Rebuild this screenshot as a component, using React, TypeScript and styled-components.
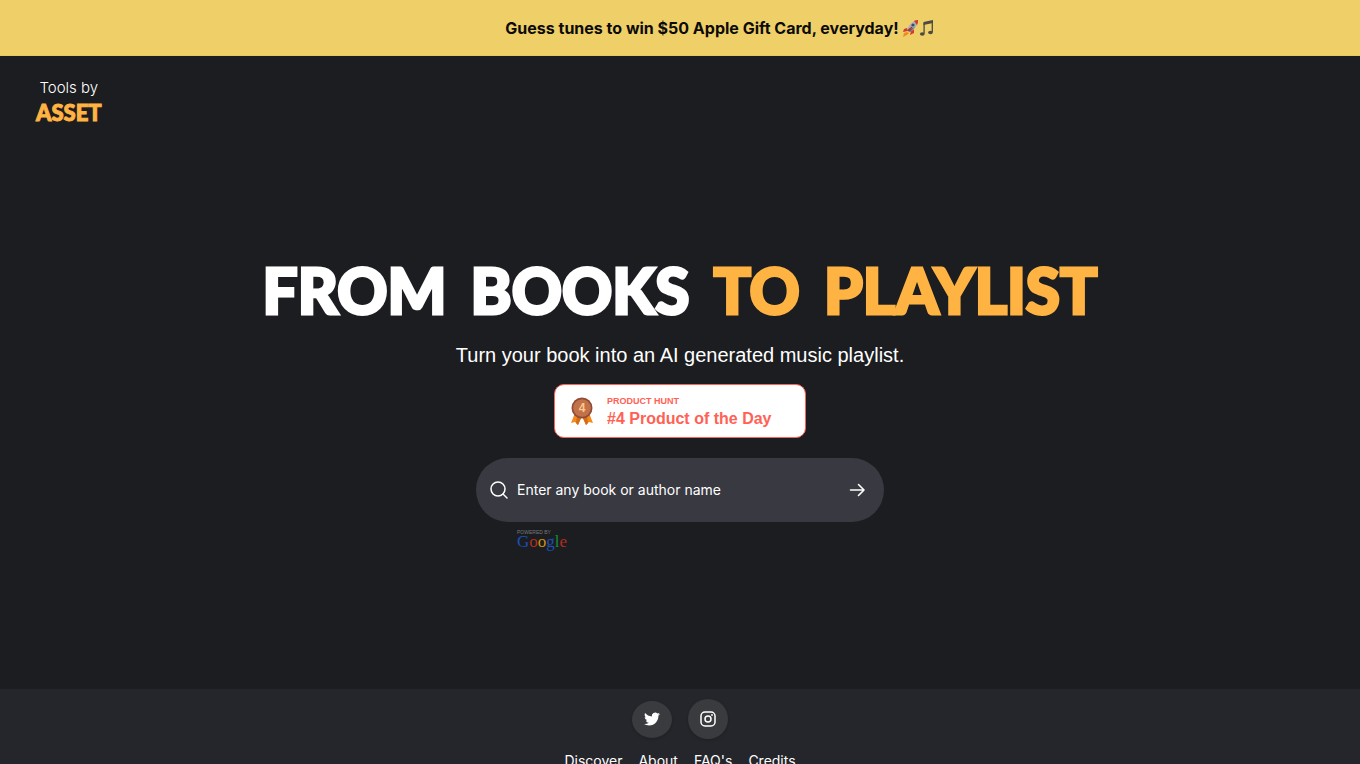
import React from "react";
import styled, { createGlobalStyle } from "styled-components";

const GlobalStyle = createGlobalStyle`
  *, *::before, *::after { box-sizing: border-box; }
  body {
    margin: 0;
    background: #1c1d20;
    color: #fff;
    font-family: Inter, "Liberation Sans", sans-serif;
  }
  h1, p { margin: 0; }
  a { color: inherit; text-decoration: none; }
`;

const Page = styled.div`
  display: flex;
  flex-direction: column;
`;

const Hero = styled.div`
  display: flex;
  flex-direction: column;
  min-height: calc(100vh - 75px);
`;

const Banner = styled.a`
  display: flex;
  align-items: center;
  justify-content: center;
  gap: 4px;
  height: 56px;
  padding-left: 80px;
  background: #efd068;
  border-bottom: 1px solid #e6c95f;
  && { color: #0c0b08; }
  font-size: 16px;
  font-weight: 700;
  line-height: 24px;
`;

const Emojis = styled.span`
  display: flex;
`;

const Header = styled.header`
  display: flex;
  padding: 21px 36px 0;
`;

const Brand = styled.a`
  display: flex;
  flex-direction: column;
  align-items: center;
`;

const BrandLead = styled.span`
  font-size: 15px;
  font-weight: 300;
  line-height: 22px;
`;

const BrandName = styled.span`
  color: #ffb342;
  font-family: Lato, sans-serif;
  font-size: 22px;
  font-weight: 900;
  line-height: 28px;
  -webkit-text-stroke: 1px #ffb342;
`;

const Main = styled.main`
  display: flex;
  flex: 1;
  flex-direction: column;
  align-items: center;
  padding: 123px 16px 48px;
`;

const Title = styled.h1`
  display: flex;
  flex-wrap: wrap;
  justify-content: center;
  column-gap: 24px;
  font-family: Lato, sans-serif;
  font-size: 62px;
  font-weight: 900;
  line-height: 80px;
  text-transform: uppercase;
  -webkit-text-stroke: 3px currentColor;
`;

const Word = styled.span<{ $accent?: boolean }>`
  color: ${(p) => (p.$accent ? "#ffb342" : "#fff")};
  -webkit-text-stroke-color: ${(p) => (p.$accent ? "#ffb342" : "#fff")};
`;

const Subtitle = styled.p`
  margin-top: 10px;
  font-family: "Liberation Sans", Arial, sans-serif;
  font-size: 20px;
  line-height: 30px;
  text-align: center;
`;

const Award = styled.a`
  display: flex;
  align-items: center;
  gap: 12px;
  width: 252px;
  height: 54px;
  margin-top: 14px;
  padding: 0 14px;
  border: 1px solid #ff6154;
  border-radius: 10px;
  background: #fff;
  && { color: #ff6154; }
  font-family: "Liberation Sans", Arial, sans-serif;
  font-weight: 700;
`;

const AwardText = styled.span`
  display: flex;
  flex-direction: column;
  padding-top: 3px;
`;

const AwardSource = styled.span`
  font-size: 9px;
  line-height: 12px;
`;

const AwardRank = styled.span`
  font-size: 16px;
  line-height: 24px;
`;

const SearchArea = styled.div`
  width: 100%;
  max-width: 408px;
  margin-top: 20px;
`;

const SearchForm = styled.form`
  display: flex;
  align-items: center;
  gap: 8px;
  height: 64px;
  padding: 0 12px 0 13px;
  border-radius: 32px;
  background: #383941;
`;

const SearchInput = styled.input`
  flex: 1;
  min-width: 0;
  padding: 0;
  border: 0;
  outline: 0;
  background: transparent;
  color: #fff;
  font: 400 14px/20px Inter, sans-serif;
  &::placeholder { color: #fff; opacity: 1; }
`;

const IconButton = styled.button`
  display: flex;
  padding: 5px;
  border: 0;
  background: transparent;
  color: #fff;
  cursor: pointer;
`;

const PoweredBy = styled.div`
  display: flex;
  flex-direction: column;
  margin: 7px 0 0 41px;
`;

const PoweredLabel = styled.span`
  color: #77787e;
  font-family: "Liberation Sans", Arial, sans-serif;
  font-size: 5px;
  line-height: 6px;
`;

const GoogleWord = styled.span`
  font-family: "Liberation Serif", serif;
  font-size: 17px;
  line-height: 14px;
`;

const Letter = styled.span<{ $color: string }>`
  color: ${(p) => p.$color};
`;

const Footer = styled.footer`
  display: flex;
  flex-direction: column;
  align-items: center;
  gap: 12px;
  padding: 10px 16px 24px;
  background: #25262b;
`;

const Socials = styled.div`
  display: flex;
  align-items: center;
  gap: 16px;
`;

const Social = styled.a<{ $height: number }>`
  display: flex;
  align-items: center;
  justify-content: center;
  width: 40px;
  height: ${(p) => p.$height}px;
  border-radius: 50%;
  background: #3a3b3e;
  box-shadow: 0 1px 3px #0003;
`;

const FooterNav = styled.nav`
  display: flex;
  gap: 16px;
  font-size: 14px;
  line-height: 20px;
`;

const Rocket = () => (
  <svg width="16" height="18" viewBox="0 0 16 18" aria-hidden="true">
    <path d="M4 9 1 10 0 13l5-1zM8 12l-1 4 4-2 0-4z" fill="#d63a2a" />
    <path d="M4 13 1 14 0 18l4-2 2-2z" fill="#f08a24" />
    <path d="M4 11C6 5 10 2 15 1c0 5-3 9-8 12z" fill="#a9b2bc" />
    <path d="M11 2c1-1 3-1 4-1 0 2 0 3-1 5z" fill="#d63a2a" />
    <path d="M4 11l3 2 5-5c-2 1-4 2-5 1z" fill="#5b6673" />
    <circle cx="10" cy="6" r="1.6" fill="#34506a" />
    <path d="m5 12 4-4" stroke="#c52d24" strokeWidth="1.5" />
  </svg>
);

const Notes = () => (
  <svg width="16" height="18" viewBox="0 0 16 18" aria-hidden="true">
    <path d="M4.5 3 14 1v3L4.5 6z" fill="#4c4b43" />
    <path d="M5.1 4v10.5M13.3 2v11" stroke="#4c4b43" strokeWidth="1.3" />
    <ellipse cx="3.3" cy="15" rx="2.4" ry="1.8" fill="#4c4b43" />
    <ellipse cx="11.5" cy="13.5" rx="2.4" ry="1.8" fill="#4c4b43" />
  </svg>
);

const Medal = () => (
  <svg width="26" height="30" viewBox="0 0 26 30" aria-hidden="true">
    <path d="m6 17-4 10 4-1 3 3 4-9zM20 17l4 10-4-1-3 3-4-9z" fill="#f28a1c" />
    <path d="m8 20-1 7 2 2 4-9zM18 20l1 7-2 2-4-9z" fill="#d76c16" />
    <circle cx="13" cy="12" r="10.5" fill="#8f4c35" />
    <circle cx="13" cy="12" r="8.8" fill="#c1724a" />
    <text x="13" y="16" textAnchor="middle" fill="#ffc78b" fontFamily="Liberation Sans" fontWeight="700" fontSize="12">4</text>
  </svg>
);

const SearchIcon = () => (
  <svg width="20" height="20" viewBox="0 0 20 20" fill="none" stroke="#fff" strokeWidth="1.5" strokeLinecap="round" aria-hidden="true">
    <circle cx="9" cy="9" r="7" />
    <path d="m14 14 4 4" />
  </svg>
);

const ArrowIcon = () => (
  <svg width="20" height="20" viewBox="0 0 20 20" fill="none" stroke="#fff" strokeWidth="1.6" strokeLinecap="round" strokeLinejoin="round" aria-hidden="true">
    <path d="M3.5 10h13.5M11.5 4.5 17 10l-5.5 5.5" />
  </svg>
);

const TwitterIcon = () => (
  <svg width="16" height="16" viewBox="0 0 24 24" fill="#fff" aria-hidden="true">
    <path d="M23.953 4.57a10 10 0 0 1-2.825.775 4.958 4.958 0 0 0 2.163-2.723 9.99 9.99 0 0 1-3.127 1.184 4.92 4.92 0 0 0-8.384 4.482C7.69 8.095 4.067 6.13 1.64 3.162a4.822 4.822 0 0 0-.666 2.475c0 1.71.87 3.213 2.188 4.096a4.904 4.904 0 0 1-2.228-.616v.06a4.923 4.923 0 0 0 3.946 4.827 4.996 4.996 0 0 1-2.212.085 4.936 4.936 0 0 0 4.604 3.417 9.867 9.867 0 0 1-6.102 2.105c-.39 0-.779-.023-1.17-.067a13.995 13.995 0 0 0 7.557 2.209c9.053 0 13.998-7.496 13.998-13.985 0-.21 0-.42-.015-.63a9.935 9.935 0 0 0 2.413-2.568z" />
  </svg>
);

const InstagramIcon = () => (
  <svg width="16" height="16" viewBox="0 0 16 16" fill="none" stroke="#fff" strokeWidth="1.5" aria-hidden="true">
    <rect x="1" y="1" width="14" height="14" rx="4" />
    <circle cx="8" cy="8" r="3" />
    <circle cx="12" cy="4" r="0.9" fill="#fff" stroke="none" />
  </svg>
);

const googleLetters = [
  ["G", "#1a50b5"],
  ["o", "#b52b20"],
  ["o", "#c9920f"],
  ["g", "#1a50b5"],
  ["l", "#168a3c"],
  ["e", "#b52b20"],
];

const links = ["Discover", "About", "FAQ's", "Credits"];

export default function App() {
  return (
    <Page>
      <GlobalStyle />
      <Hero>
        <Banner href="#play">
          Guess tunes to win $50 Apple Gift Card, everyday!
          <Emojis>
            <Rocket />
            <Notes />
          </Emojis>
        </Banner>
        <Header>
          <Brand href="#home">
            <BrandLead>Tools by</BrandLead>
            <BrandName>ASSET</BrandName>
          </Brand>
        </Header>
        <Main>
          <Title>
            <Word>From</Word> <Word>Books</Word> <Word $accent>to</Word> <Word $accent>Playlist</Word>
          </Title>
          <Subtitle>Turn your book into an AI generated music playlist.</Subtitle>
          <Award href="#award">
            <Medal />
            <AwardText>
              <AwardSource>PRODUCT HUNT</AwardSource>
              <AwardRank>#4 Product of the Day</AwardRank>
            </AwardText>
          </Award>
          <SearchArea>
            <SearchForm role="search" onSubmit={(e) => e.preventDefault()}>
              <SearchIcon />
              <SearchInput aria-label="Book or author" placeholder="Enter any book or author name" />
              <IconButton type="submit" aria-label="Search">
                <ArrowIcon />
              </IconButton>
            </SearchForm>
            <PoweredBy>
              <PoweredLabel>POWERED BY</PoweredLabel>
              <GoogleWord>
                {googleLetters.map(([letter, color], i) => (
                  <Letter key={i} $color={color}>{letter}</Letter>
                ))}
              </GoogleWord>
            </PoweredBy>
          </SearchArea>
        </Main>
      </Hero>
      <Footer>
        <Socials>
          <Social href="#twitter" aria-label="Twitter" $height={37}>
            <TwitterIcon />
          </Social>
          <Social href="#instagram" aria-label="Instagram" $height={40}>
            <InstagramIcon />
          </Social>
        </Socials>
        <FooterNav>
          {links.map((label) => (
            <a key={label} href={"#" + label.toLowerCase()}>{label}</a>
          ))}
        </FooterNav>
      </Footer>
    </Page>
  );
}
